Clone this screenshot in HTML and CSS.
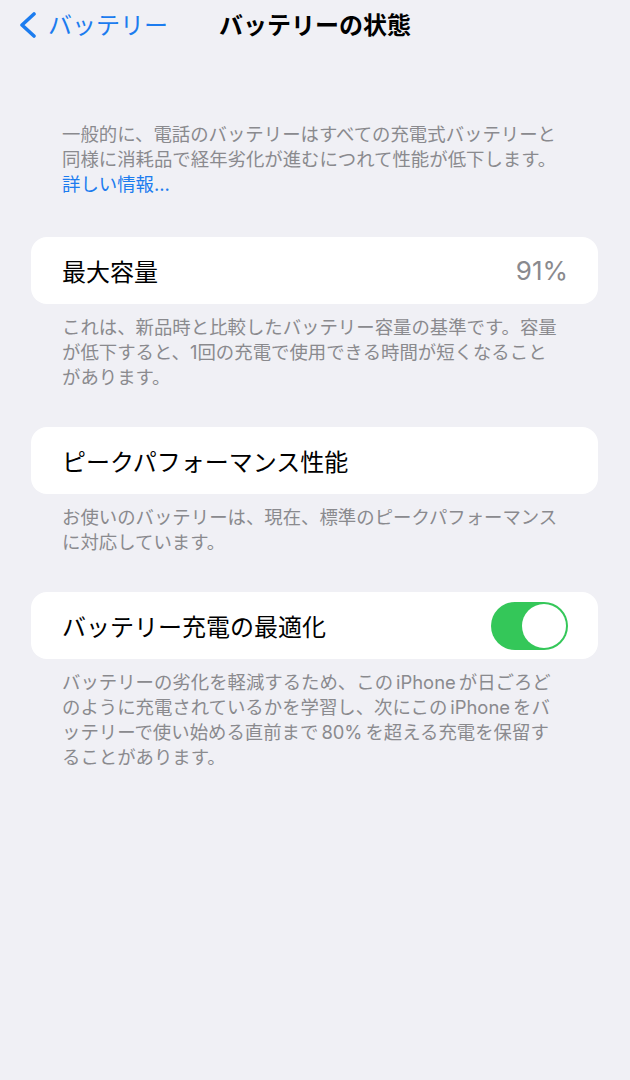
FILE: index.html
```html
<!DOCTYPE html>
<html lang="ja">
<head>
    <meta charset="UTF-8">
    <meta name="viewport" content="width=device-width, initial-scale=1.0">
    <title>バッテリーの状態</title>
    <link rel="stylesheet" href="styles.css">
</head>
<body>
    <header class="nav-bar">
        <a class="back-button" href="#">
            <svg class="chevron" width="18" height="26" viewBox="0 0 18 26">
                <polyline points="15,2 3,13 15,24" fill="none" stroke="currentColor" stroke-width="3.6" stroke-linecap="round" stroke-linejoin="round"/>
            </svg>
            <span>バッテリー</span>
        </a>
        <h1 class="nav-title">バッテリーの状態</h1>
        <div></div>
    </header>

    <main class="content">
        <p class="intro">
            一般的に、電話のバッテリーはすべての充電式バッテリーと<br>
            同様に消耗品で経年劣化が進むにつれて性能が低下します。<br>
            <a class="link" href="#">詳しい情報...</a>
        </p>

        <section class="group">
            <div class="cell">
                <span class="cell-label">最大容量</span>
                <span class="cell-value">91%</span>
            </div>
            <p class="footer-text">
                これは、新品時と比較したバッテリー容量の基準です。容量<br>
                が低下すると、1回の充電で使用できる時間が短くなること<br>
                があります。
            </p>
        </section>

        <section class="group">
            <div class="cell">
                <span class="cell-label">ピークパフォーマンス性能</span>
            </div>
            <p class="footer-text">
                お使いのバッテリーは、現在、標準のピークパフォーマンス<br>
                に対応しています。
            </p>
        </section>

        <section class="group">
            <div class="cell">
                <span class="cell-label">バッテリー充電の最適化</span>
                <div class="toggle on"><div class="knob"></div></div>
            </div>
            <p class="footer-text">
                バッテリーの劣化を軽減するため、この<span class="latin">iPhone</span>が日ごろど<br>
                のように充電されているかを学習し、次にこの<span class="latin">iPhone</span>をバ<br>
                ッテリーで使い始める直前まで<span class="latin">80%</span>を超える充電を保留す<br>
                ることがあります。
            </p>
        </section>
    </main>
</body>
</html>
```

FILE: styles.css
```css
body {
    margin: 0;
    background-color: #f0f0f5;
    color: #000000;
    font-family: Inter, "Noto Sans CJK JP", sans-serif;
}
a {
    text-decoration: none;
}
.nav-bar {
    display: grid;
    grid-template-columns: 1fr auto 1fr;
    align-items: center;
    height: 46px;
}
.back-button {
    display: flex;
    align-items: center;
    gap: 11px;
    padding-left: 19px;
    color: #1c7cef;
    font-size: 24px;
}
.chevron {
    margin-top: 3px;
}
.nav-title {
    margin: 0;
    font-size: 24px;
    font-weight: 700;
}
.content {
    padding: 0 32px 0 31px;
}
.intro {
    margin: 76px 0 40px;
    padding-left: 31px;
    font-size: 18.4px;
    line-height: 25px;
    color: #8a8a8e;
    white-space: nowrap;
}
.link {
    color: #1c7cef;
}
.group {
    margin-bottom: 37px;
}
.cell {
    display: flex;
    align-items: center;
    justify-content: space-between;
    height: 67px;
    padding: 0 30px 0 31px;
    background-color: #ffffff;
    border-radius: 16px;
}
.cell-label {
    font-size: 24px;
}
.cell-value {
    font-size: 26px;
    color: #8a8a8e;
}
.toggle {
    display: flex;
    justify-content: flex-end;
    align-items: center;
    box-sizing: border-box;
    width: 77px;
    height: 48px;
    padding: 2px;
    border-radius: 24px;
    background-color: #34c759;
}
.knob {
    width: 44px;
    height: 44px;
    border-radius: 50%;
    background-color: #ffffff;
}
.footer-text {
    margin: 0;
    padding: 11px 0 0 31px;
    font-size: 18.4px;
    line-height: 25px;
    color: #8a8a8e;
    white-space: nowrap;
}
.latin {
    margin: 0 3px;
}
```
